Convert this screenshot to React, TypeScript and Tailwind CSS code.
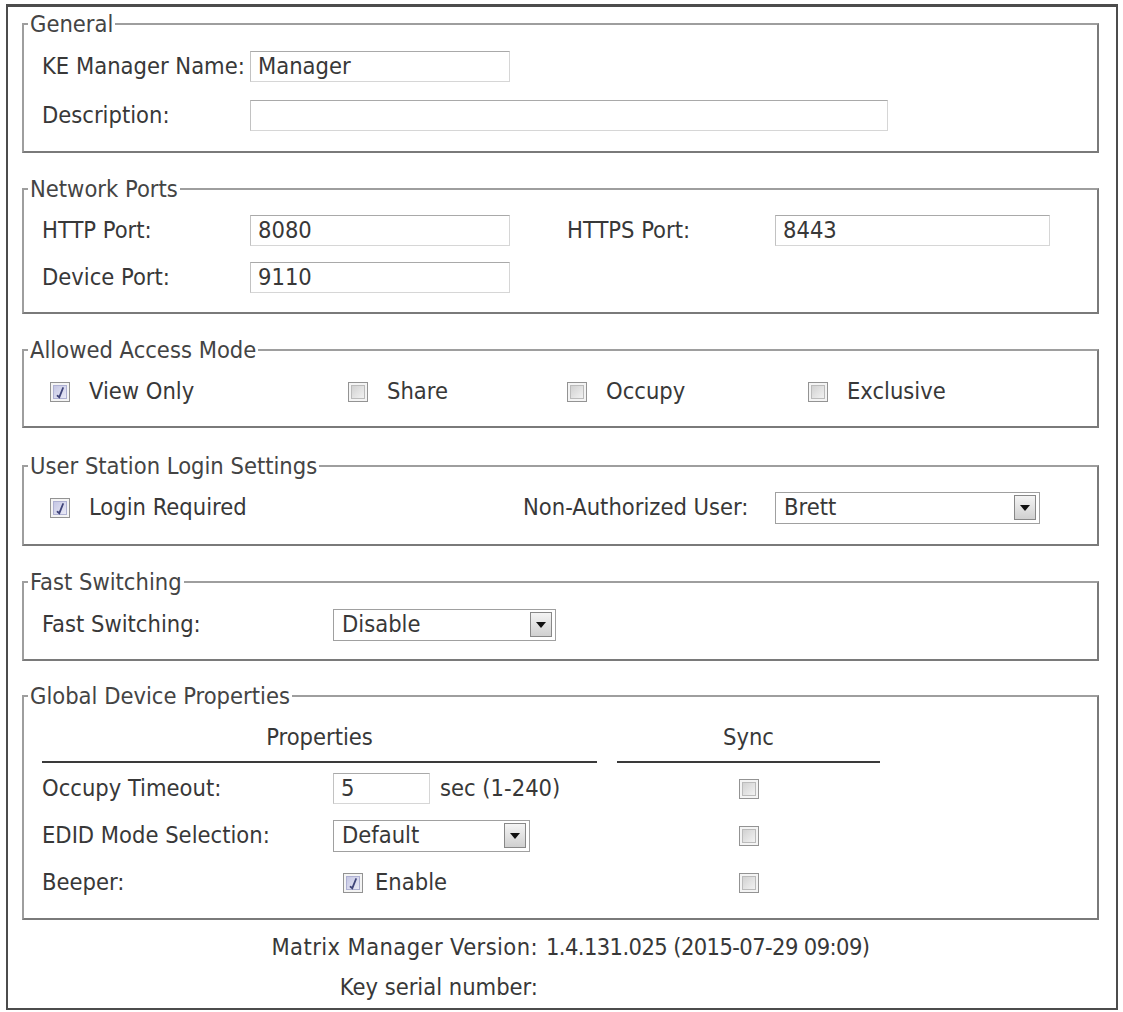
import * as React from 'react';
import clsx from 'clsx';

const Group: React.FC<{ title: string; className?: string; children: React.ReactNode }> = ({ title, className, children }) => (
  <fieldset
    className={clsx(
      'min-w-0 border-2 border-[#9e9e9e] border-r-[#7a7a7a] border-b-[#7a7a7a] pl-[4px]',
      className,
    )}
  >
    <legend className="px-[2px] leading-[26px] text-[#444]">{title}</legend>
    <div className="pl-[14px]">{children}</div>
  </fieldset>
);

const TextBox: React.FC<{ value?: string; className?: string }> = ({ value = '', className }) => (
  <div
    className={clsx(
      'flex h-[31px] shrink-0 items-center border border-[#d6d6d6] border-t-[#a9a9a9] border-l-[#c2c2c2] bg-white pl-[7px]',
      className,
    )}
  >
    {value}
  </div>
);

const DropDown: React.FC<{ value: string; className?: string }> = ({ value, className }) => (
  <div className={clsx('flex h-[32px] shrink-0 items-center border border-[#a0a0a0] bg-white pl-[8px] pr-[3px]', className)}>
    <span className="flex-1">{value}</span>
    <span className="flex h-[25px] w-[22px] items-center justify-center border border-[#888] bg-gradient-to-b from-[#f4f4f4] to-[#d0d0d0]">
      <svg width="10" height="6" viewBox="0 0 10 6">
        <path d="M0 0h10L5 6z" fill="#111" />
      </svg>
    </span>
  </div>
);

const Check: React.FC<{ checked?: boolean }> = ({ checked }) => (
  <svg width="20" height="20" viewBox="0 0 20 20" className="shrink-0">
    <defs>
      <linearGradient id={checked ? 'cbOn' : 'cbOff'} x1="0" y1="0" x2="1" y2="1">
        <stop offset="0" stopColor={checked ? '#c3c5e3' : '#d0d0d0'} />
        <stop offset="1" stopColor={checked ? '#ebebf7' : '#f3f3f3'} />
      </linearGradient>
    </defs>
    <rect x="0.5" y="0.5" width="19" height="19" fill="#f4f4f4" stroke="#939393" />
    <rect x="3.5" y="3.5" width="13" height="13" fill={`url(#${checked ? 'cbOn' : 'cbOff'})`} stroke={checked ? '#aeb0d2' : '#bbbbbb'} />
    {checked && <path d="M7.5 13.8 L9.3 15.2 L13 6" fill="none" stroke="#3f4479" strokeWidth="1.8" strokeLinecap="round" />}
  </svg>
);

const Row: React.FC<{ className?: string; children: React.ReactNode }> = ({ className, children }) => (
  <div className={clsx('flex h-[47px] items-center', className)}>{children}</div>
);

export default function App() {
  return (
    <div className="h-[1012px] w-[1123px] bg-white pl-[6px] pt-[4px] font-['DejaVu_Sans_Condensed','DejaVu_Sans',sans-serif] text-[23.5px] text-[#383838]">
      <div className="flex h-[1006px] w-[1112px] flex-col border-2 border-t-[3px] border-[#4c4c4c] pl-[14px] pr-[17px] pt-[4px]">
        <Group title="General" className="pt-[5px] pb-[11px]">
          <Row className="h-[49px]">
            <span className="w-[208px] shrink-0">KE Manager Name:</span>
            <TextBox value="Manager" className="w-[260px]" />
          </Row>
          <Row className="h-[49px]">
            <span className="w-[208px] shrink-0">Description:</span>
            <TextBox className="w-[638px]" />
          </Row>
        </Group>

        <Group title="Network Ports" className="mt-[23px] pt-[5px] pb-[11px]">
          <Row>
            <span className="w-[208px] shrink-0">HTTP Port:</span>
            <TextBox value="8080" className="w-[260px]" />
            <span className="ml-[57px] w-[208px] shrink-0">HTTPS Port:</span>
            <TextBox value="8443" className="w-[275px]" />
          </Row>
          <Row>
            <span className="w-[208px] shrink-0">Device Port:</span>
            <TextBox value="9110" className="w-[260px]" />
          </Row>
        </Group>

        <Group title="Allowed Access Mode" className="mt-[23px] pt-[5px] pb-[11px]">
          <div className="grid h-[47px] grid-cols-[298px_219px_241px_1fr] items-center">
            {[
              ['View Only', true],
              ['Share', false],
              ['Occupy', false],
              ['Exclusive', false],
            ].map(([name, on]) => (
              <label key={name as string} className="flex items-center gap-[19px] pl-[8px]">
                <Check checked={on as boolean} />
                {name}
              </label>
            ))}
          </div>
        </Group>

        <Group title="User Station Login Settings" className="mt-[25px] pt-[5px] pb-[13px]">
          <Row>
            <label className="flex w-[481px] shrink-0 items-center gap-[19px] pl-[8px]">
              <Check checked />
              Login Required
            </label>
            <span className="w-[252px] shrink-0">Non-Authorized User:</span>
            <DropDown value="Brett" className="w-[265px]" />
          </Row>
        </Group>

        <Group title="Fast Switching" className="mt-[23px] pt-[6px] pb-[11px]">
          <Row>
            <span className="w-[291px] shrink-0">Fast Switching:</span>
            <DropDown value="Disable" className="w-[223px]" />
          </Row>
        </Group>

        <Group title="Global Device Properties" className="mt-[22px] pt-[5px] pb-[12px]">
          <div className="flex">
            <div className="flex h-[49px] w-[555px] items-center justify-center border-b-2 border-[#3a3a3a]">Properties</div>
            <div className="ml-[20px] flex h-[49px] w-[263px] items-center justify-center border-b-2 border-[#3a3a3a]">Sync</div>
          </div>
          <div className="pt-[2px]">
            <Row>
              <span className="w-[291px] shrink-0">Occupy Timeout:</span>
              <div className="flex w-[264px] items-center">
                <TextBox value="5" className="w-[97px]" />
                <span className="ml-[10px]">sec (1-240)</span>
              </div>
              <div className="ml-[20px] flex w-[263px] justify-center">
                <Check />
              </div>
            </Row>
            <Row>
              <span className="w-[291px] shrink-0">EDID Mode Selection:</span>
              <div className="flex w-[264px] items-center">
                <DropDown value="Default" className="w-[197px]" />
              </div>
              <div className="ml-[20px] flex w-[263px] justify-center">
                <Check />
              </div>
            </Row>
            <Row>
              <span className="w-[291px] shrink-0">Beeper:</span>
              <label className="flex w-[264px] items-center gap-[12px] pl-[10px]">
                <Check checked />
                Enable
              </label>
              <div className="ml-[20px] flex w-[263px] justify-center">
                <Check />
              </div>
            </Row>
          </div>
        </Group>

        {/* version info, captions right-aligned against the value column */}
        <div className="mt-[8px] grid grid-cols-[516px_1fr] gap-x-[8px]">
          <span className="flex h-[40px] items-center justify-end tracking-[0.4px]">Matrix Manager Version:</span>
          <span className="flex h-[40px] items-center tracking-[-0.6px]">1.4.131.025 (2015-07-29 09:09)</span>
          <span className="flex h-[40px] items-center justify-end">Key serial number:</span>
          <span className="flex h-[40px] items-center" />
        </div>
      </div>
    </div>
  );
}
